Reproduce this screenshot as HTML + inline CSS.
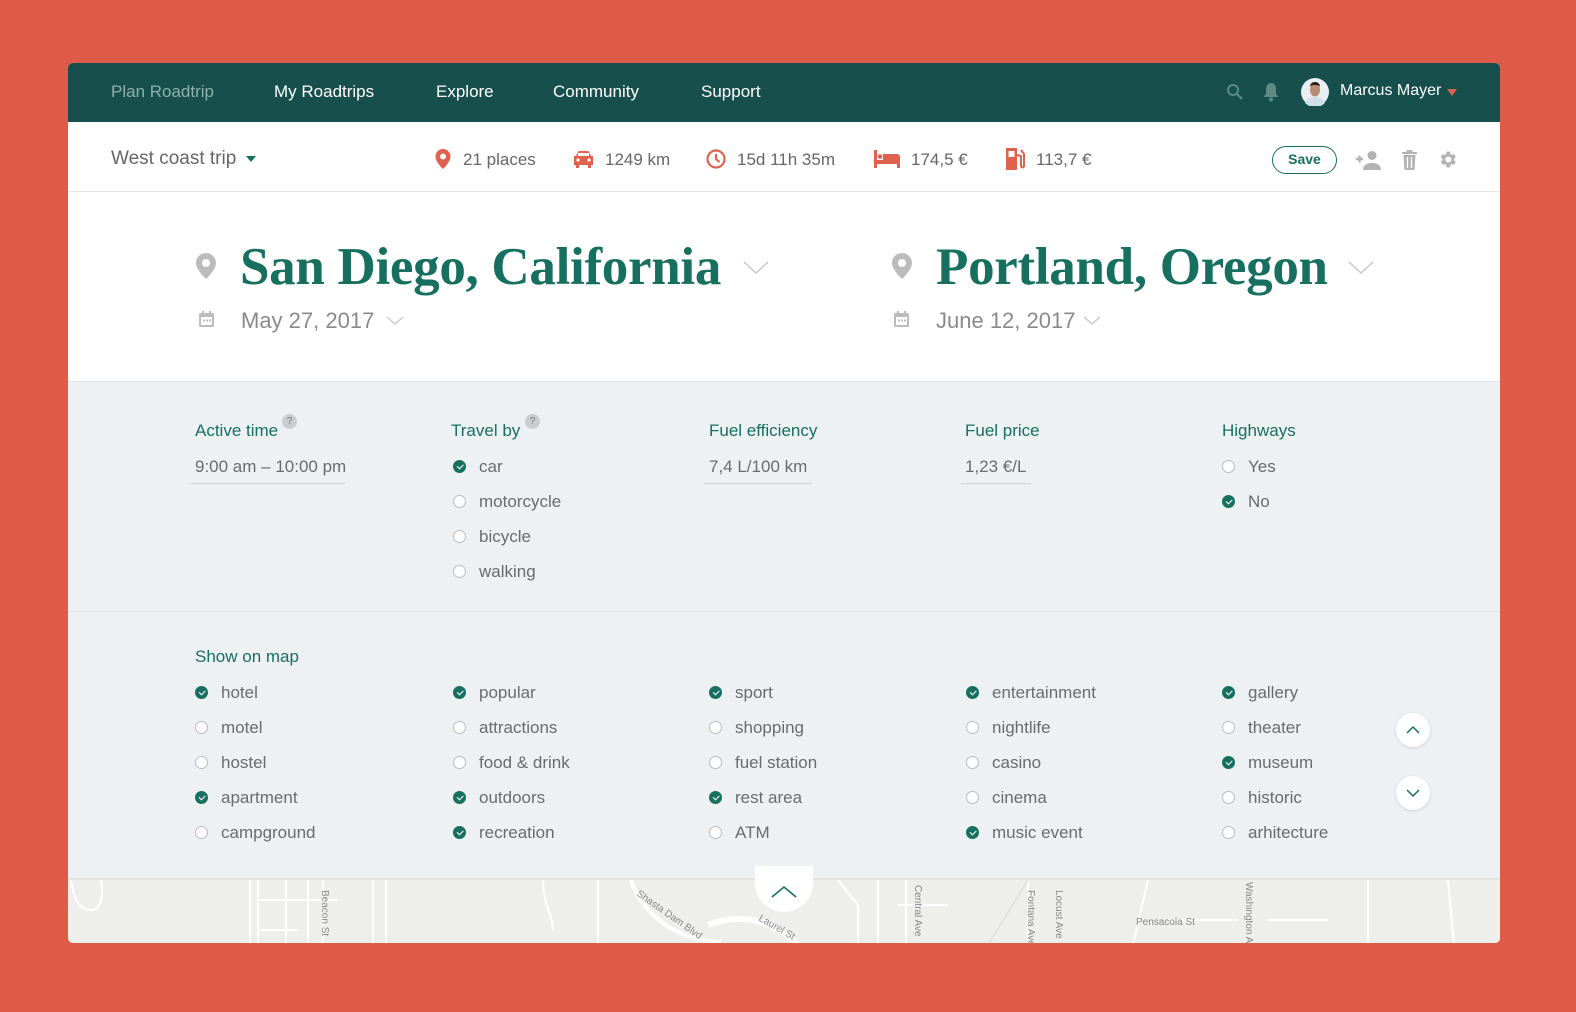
<!DOCTYPE html>
<html><head><meta charset="utf-8"><style>
*{margin:0;padding:0;box-sizing:border-box}
body{width:1576px;height:1012px;background:#DD5B47;font-family:"Liberation Sans",sans-serif;position:relative;overflow:hidden}
#card{position:absolute;left:68px;top:63px;width:1432px;height:880px;border-radius:5px;overflow:hidden;background:#fff}
.a{position:absolute;white-space:nowrap}
.nav{left:0;top:0;width:1432px;height:59px;background:#164F4B}
.nav .a{top:19px;font-size:17px;color:#fff}
.tb{left:0;top:59px;width:1432px;height:70px;background:#fff;border-bottom:1px solid #e6e8ea}
.tb .a{font-size:17px;color:#666}
.hero{left:0;top:129px;width:1432px;height:190px;background:#fff;border-bottom:1px solid #e2e6e9}
.city{font-family:"Liberation Serif",serif;font-weight:bold;font-size:53px;color:#17705F;letter-spacing:-0.3px}
.date{font-size:22px;color:#8a8a8a}
.set{left:0;top:319px;width:1432px;height:496px;background:#EDF1F4}
.lbl{font-size:17px;color:#17705F}
.val{font-size:17px;color:#6b6b6b}
.ul{height:1px;background:#cfd3d6}
.ck{font-size:17px;color:#6b6b6b;height:20px;line-height:20px;padding-left:26px}
.ck:before{content:"";position:absolute;left:0;top:3px;width:13px;height:13px;border:1px solid #b9bcbe;border-radius:50%;background:#fff;box-sizing:border-box}
.ck.on:before{background:#17705F;border-color:#17705F}
.ck.on:after{content:"";position:absolute;left:4px;top:7px;width:5px;height:2.5px;border-left:1.5px solid #fff;border-bottom:1.5px solid #fff;transform:rotate(-45deg)}
.q{width:15px;height:15px;border-radius:50%;background:#c9cdd0;color:#777;font-size:10px;text-align:center;line-height:15px}
.map{left:0;top:815px;width:1432px;height:65px;background:#EEEEEA;border-top:2px solid #e3e4e2}
.rb{width:34px;height:34px;border-radius:50%;background:#fff;box-shadow:0 1px 3px rgba(0,0,0,.12)}
</style></head><body>
<div id="card">
 <div class="a nav">
  <div class="a" style="left:43px;color:#8fb0aa">Plan Roadtrip</div>
  <div class="a" style="left:206px">My Roadtrips</div>
  <div class="a" style="left:368px">Explore</div>
  <div class="a" style="left:485px">Community</div>
  <div class="a" style="left:633px">Support</div>
  <svg class="a" style="left:1158px;top:20px" width="18" height="18" viewBox="0 0 18 18"><circle cx="7" cy="7" r="5" fill="none" stroke="#5f8a83" stroke-width="2"/><path d="M11 11l5 5" stroke="#5f8a83" stroke-width="2.2"/></svg>
  <svg class="a" style="left:1195px;top:19px" width="16" height="20" viewBox="0 0 16 20"><path d="M8 1c-3 0-5 2.5-5 6v5l-2 2v1h14v-1l-2-2V7c0-3.5-2-6-5-6z" fill="#5f8a83"/><circle cx="8" cy="17.5" r="2" fill="#5f8a83"/></svg>
  <svg class="a" style="left:1233px;top:15px" width="28" height="28" viewBox="0 0 28 28"><circle cx="14" cy="14" r="14" fill="#e8eef2"/><path d="M4 25c2-5 6-6 10-6s8 1 10 6a14 14 0 0 1-20 0z" fill="#cfe0ea"/><ellipse cx="14" cy="12" rx="5" ry="6.5" fill="#b88b73"/><path d="M9 9c0-4 3-5 5-5s5 1 5 5c-1-2-3-2-5-2s-4 0-5 2z" fill="#2b1e18"/></svg>
  <div class="a" style="left:1272px;font-size:16px">Marcus Mayer</div>
  <div class="a" style="left:1379px;top:26px;width:0;height:0;border-left:5px solid transparent;border-right:5px solid transparent;border-top:7px solid #E0614D"></div>
 </div>
 <div class="a tb">
  <div class="a" style="left:43px;top:26px;font-size:19px;color:#666">West coast trip</div>
  <div class="a" style="left:178px;top:34px;width:0;height:0;border-left:5px solid transparent;border-right:5px solid transparent;border-top:6px solid #17705F"></div>
  <svg class="a" style="left:365px;top:26px" width="20" height="22" viewBox="0 0 20 22"><path d="M10 1a7.5 7.5 0 0 0-7.5 7.5C2.5 14 10 21 10 21s7.5-7 7.5-12.5A7.5 7.5 0 0 0 10 1z" fill="#E0614D"/><circle cx="10" cy="8.5" r="3" fill="#fff"/></svg>
  <div class="a" style="left:395px;top:28px">21 places</div>
  <svg class="a" style="left:504px;top:27px" width="23" height="20" viewBox="0 0 23 20"><path d="M4 7l2.5-5h10L19 7h2v9h-2v3h-3v-3H7v3H4v-3H2V7z" fill="#E0614D"/><rect x="6" y="4" width="11" height="3" fill="#fff"/><circle cx="6" cy="11" r="1.6" fill="#fff"/><circle cx="17" cy="11" r="1.6" fill="#fff"/></svg>
  <div class="a" style="left:537px;top:28px">1249 km</div>
  <svg class="a" style="left:637px;top:26px" width="22" height="22" viewBox="0 0 22 22"><circle cx="11" cy="11" r="8.5" fill="none" stroke="#E0614D" stroke-width="2.2"/><path d="M11 6v5l3.5 3" fill="none" stroke="#E0614D" stroke-width="2"/></svg>
  <div class="a" style="left:669px;top:28px">15d 11h 35m</div>
  <svg class="a" style="left:805px;top:27px" width="28" height="20" viewBox="0 0 28 20"><path d="M1 1h3v10h6V5h14a3 3 0 0 1 3 3v11h-3v-4H4v4H1z" fill="#E0614D"/><circle cx="7" cy="7.5" r="2.3" fill="#E0614D"/></svg>
  <div class="a" style="left:843px;top:28px">174,5 €</div>
  <svg class="a" style="left:936px;top:25px" width="22" height="24" viewBox="0 0 22 24"><path d="M2 1h11v22H2z" fill="#E0614D"/><rect x="4.5" y="4" width="6" height="6" fill="#fff"/><path d="M13 8l4 1v10a1.5 1.5 0 0 0 3 0V7l-3-4" fill="none" stroke="#E0614D" stroke-width="2"/></svg>
  <div class="a" style="left:968px;top:28px">113,7 €</div>
  <div class="a" style="left:1204px;top:24px;width:65px;height:28px;border:1.5px solid #17705F;border-radius:14px;text-align:center;line-height:25px;font-size:14px;font-weight:bold;color:#17705F">Save</div>
  <svg class="a" style="left:1287px;top:28px" width="27" height="20" viewBox="0 0 27 20"><circle cx="17" cy="5.5" r="4.5" fill="#b3b3b3"/><path d="M8 20c0-5 4-7 9-7s9 2 9 7z" fill="#b3b3b3"/><path d="M1 9h7M4.5 5.5v7" stroke="#b3b3b3" stroke-width="2.4"/></svg>
  <svg class="a" style="left:1333px;top:27px" width="17" height="21" viewBox="0 0 17 21"><path d="M1 3h15v2H1zM5.5 1h6v2h-6z" fill="#b3b3b3"/><path d="M2.5 6h12l-1 15h-10z" fill="#b3b3b3"/><path d="M6.5 8v11M10.5 8v11" stroke="#fff" stroke-width="1.3"/></svg>
  <svg class="a" style="left:1369px;top:27px" width="21" height="21" viewBox="0 0 24 24"><path fill="#b3b3b3" d="M19.4 13a7.5 7.5 0 0 0 0-2l2.1-1.6-2-3.5-2.5 1a7.6 7.6 0 0 0-1.7-1L14.9 3h-4l-.4 2.9a7.6 7.6 0 0 0-1.7 1l-2.5-1-2 3.5L6.4 11a7.5 7.5 0 0 0 0 2l-2.1 1.6 2 3.5 2.5-1a7.6 7.6 0 0 0 1.7 1l.4 2.9h4l.4-2.9a7.6 7.6 0 0 0 1.7-1l2.5 1 2-3.5zM12.9 15.5a3.5 3.5 0 1 1 0-7 3.5 3.5 0 0 1 0 7z"/></svg>
 </div>
 <div class="a hero">
  <svg class="a" style="left:126px;top:60px" width="24" height="28" viewBox="0 0 24 28"><path d="M12 1a10 10 0 0 0-10 10c0 7 10 16 10 16s10-9 10-16A10 10 0 0 0 12 1z" fill="#bcbcbc"/><circle cx="12" cy="11" r="4" fill="#fff"/></svg>
  <div class="a city" style="left:172px;top:45px">San Diego, California</div>
  <svg class="a" style="left:675px;top:69px" width="26" height="14" viewBox="0 0 26 14"><path d="M1 1l12 11L25 1" fill="none" stroke="#c8c8c8" stroke-width="1.5"/></svg>
  <svg class="a" style="left:130px;top:118px" width="17" height="18" viewBox="0 0 17 18"><rect x="1" y="3" width="15" height="14" rx="1.5" fill="#bcbcbc"/><rect x="3" y="7" width="11" height="8" fill="#fff"/><rect x="4" y="1" width="2" height="4" fill="#bcbcbc"/><rect x="11" y="1" width="2" height="4" fill="#bcbcbc"/><rect x="5" y="9.5" width="2" height="2" fill="#bcbcbc"/><rect x="8" y="9.5" width="2" height="2" fill="#bcbcbc"/><rect x="11" y="9.5" width="2" height="2" fill="#bcbcbc"/></svg>
  <div class="a date" style="left:173px;top:116px">May 27, 2017</div>
  <svg class="a" style="left:318px;top:124px" width="18" height="10" viewBox="0 0 18 10"><path d="M1 1l8 7 8-7" fill="none" stroke="#c8c8c8" stroke-width="1.3"/></svg>
  <svg class="a" style="left:822px;top:60px" width="24" height="28" viewBox="0 0 24 28"><path d="M12 1a10 10 0 0 0-10 10c0 7 10 16 10 16s10-9 10-16A10 10 0 0 0 12 1z" fill="#bcbcbc"/><circle cx="12" cy="11" r="4" fill="#fff"/></svg>
  <div class="a city" style="left:868px;top:45px">Portland, Oregon</div>
  <svg class="a" style="left:1280px;top:69px" width="26" height="14" viewBox="0 0 26 14"><path d="M1 1l12 11L25 1" fill="none" stroke="#c8c8c8" stroke-width="1.5"/></svg>
  <svg class="a" style="left:825px;top:118px" width="17" height="18" viewBox="0 0 17 18"><rect x="1" y="3" width="15" height="14" rx="1.5" fill="#bcbcbc"/><rect x="3" y="7" width="11" height="8" fill="#fff"/><rect x="4" y="1" width="2" height="4" fill="#bcbcbc"/><rect x="11" y="1" width="2" height="4" fill="#bcbcbc"/><rect x="5" y="9.5" width="2" height="2" fill="#bcbcbc"/><rect x="8" y="9.5" width="2" height="2" fill="#bcbcbc"/><rect x="11" y="9.5" width="2" height="2" fill="#bcbcbc"/></svg>
  <div class="a date" style="left:868px;top:116px">June 12, 2017</div>
  <svg class="a" style="left:1015px;top:124px" width="18" height="10" viewBox="0 0 18 10"><path d="M1 1l8 7 8-7" fill="none" stroke="#c8c8c8" stroke-width="1.3"/></svg>
 </div>
 <div class="a set">
  <div class="a lbl" style="left:127px;top:39px">Active time</div>
  <div class="a q" style="left:214px;top:32px">?</div>
  <div class="a val" style="left:127px;top:75px">9:00 am – 10:00 pm</div>
  <div class="a ul" style="left:122px;top:101px;width:155px"></div>

  <div class="a lbl" style="left:383px;top:39px">Travel by</div>
  <div class="a q" style="left:457px;top:32px">?</div>
  <div class="a ck on" style="left:385px;top:75px">car</div>
  <div class="a ck" style="left:385px;top:110px">motorcycle</div>
  <div class="a ck" style="left:385px;top:145px">bicycle</div>
  <div class="a ck" style="left:385px;top:180px">walking</div>

  <div class="a lbl" style="left:641px;top:39px">Fuel efficiency</div>
  <div class="a val" style="left:641px;top:75px">7,4 L/100 km</div>
  <div class="a ul" style="left:636px;top:101px;width:108px"></div>

  <div class="a lbl" style="left:897px;top:39px">Fuel price</div>
  <div class="a val" style="left:897px;top:75px">1,23 €/L</div>
  <div class="a ul" style="left:893px;top:101px;width:70px"></div>

  <div class="a lbl" style="left:1154px;top:39px">Highways</div>
  <div class="a ck" style="left:1154px;top:75px">Yes</div>
  <div class="a ck on" style="left:1154px;top:110px">No</div>

  <div class="a" style="left:0;top:229px;width:1432px;height:1px;background:#dde2e5"></div>
  <div class="a lbl" style="left:127px;top:265px">Show on map</div>

  <div class="a ck on" style="left:127px;top:301px">hotel</div>
  <div class="a ck" style="left:127px;top:336px">motel</div>
  <div class="a ck" style="left:127px;top:371px">hostel</div>
  <div class="a ck on" style="left:127px;top:406px">apartment</div>
  <div class="a ck" style="left:127px;top:441px">campground</div>

  <div class="a ck on" style="left:385px;top:301px">popular</div>
  <div class="a ck" style="left:385px;top:336px">attractions</div>
  <div class="a ck" style="left:385px;top:371px">food &amp; drink</div>
  <div class="a ck on" style="left:385px;top:406px">outdoors</div>
  <div class="a ck on" style="left:385px;top:441px">recreation</div>

  <div class="a ck on" style="left:641px;top:301px">sport</div>
  <div class="a ck" style="left:641px;top:336px">shopping</div>
  <div class="a ck" style="left:641px;top:371px">fuel station</div>
  <div class="a ck on" style="left:641px;top:406px">rest area</div>
  <div class="a ck" style="left:641px;top:441px">ATM</div>

  <div class="a ck on" style="left:898px;top:301px">entertainment</div>
  <div class="a ck" style="left:898px;top:336px">nightlife</div>
  <div class="a ck" style="left:898px;top:371px">casino</div>
  <div class="a ck" style="left:898px;top:406px">cinema</div>
  <div class="a ck on" style="left:898px;top:441px">music event</div>

  <div class="a ck on" style="left:1154px;top:301px">gallery</div>
  <div class="a ck" style="left:1154px;top:336px">theater</div>
  <div class="a ck on" style="left:1154px;top:371px">museum</div>
  <div class="a ck" style="left:1154px;top:406px">historic</div>
  <div class="a ck" style="left:1154px;top:441px">arhitecture</div>

  <div class="a rb" style="left:1328px;top:331px"><svg width="34" height="34" viewBox="0 0 34 34"><path d="M11 20l6-6 6 6" fill="none" stroke="#17705F" stroke-width="1.5"/></svg></div>
  <div class="a rb" style="left:1328px;top:394px"><svg width="34" height="34" viewBox="0 0 34 34"><path d="M11 14l6 6 6-6" fill="none" stroke="#17705F" stroke-width="1.5"/></svg></div>
 </div>
 <div class="a map">
  <svg width="1432" height="65" viewBox="0 0 1432 65" style="position:absolute;left:0;top:0">
   <g fill="none" stroke="#fff" stroke-width="2">
    <path d="M3 0c3 20 8 30 20 30s12-20 10-30"/>
    <path d="M182 0v65M190 0v65"/><path d="M190 20h80M190 50h40"/><path d="M218 0v65M240 0v65M255 0v65"/>
    <path d="M305 0v65M318 0v65"/>
    <path d="M475 0c0 25 10 35 10 50"/><path d="M530 0v65"/>
    <path d="M563 0c10 30 40 60 90 62" stroke-width="4"/>
    <path d="M640 45c40-15 70 0 90 20" stroke-width="6"/>
    <path d="M770 0l20 25v40M810 0v65M838 0v65M830 25h50"/>
    <path d="M960 0v65M1080 0l-15 65M1300 0v65M1380 0l6 65M1100 40h70M1200 40h60"/>
    <path d="M920 65l40-65" stroke="#d8d8d4" stroke-width="1"/>
   </g>
   <g font-family="Liberation Sans,sans-serif" font-size="10" fill="#888">
    <text x="568" y="15" transform="rotate(35 568 15)">Shasta Dam Blvd</text>
    <text x="690" y="40" transform="rotate(30 690 40)">Laurel St</text>
    <text x="1068" y="45">Pensacola St</text>
    <text x="254" y="10" transform="rotate(90 254 10)">Beacon St</text>
    <text x="847" y="5" transform="rotate(90 847 5)">Central Ave</text>
    <text x="960" y="10" transform="rotate(90 960 10)">Fontana Ave</text>
    <text x="988" y="10" transform="rotate(90 988 10)">Locust Ave</text>
    <text x="1178" y="2" transform="rotate(90 1178 2)">Washington Av</text>
   </g>
  </svg>
  <div class="a" style="left:687px;top:-14px;width:58px;height:46px;background:#fff;border-radius:0 0 29px 29px"></div>
  <svg class="a" style="left:702px;top:4px" width="28" height="16" viewBox="0 0 28 16"><path d="M2 13L14 3l12 10" fill="none" stroke="#17705F" stroke-width="1.6"/></svg>
 </div>
</div>
</body></html>
